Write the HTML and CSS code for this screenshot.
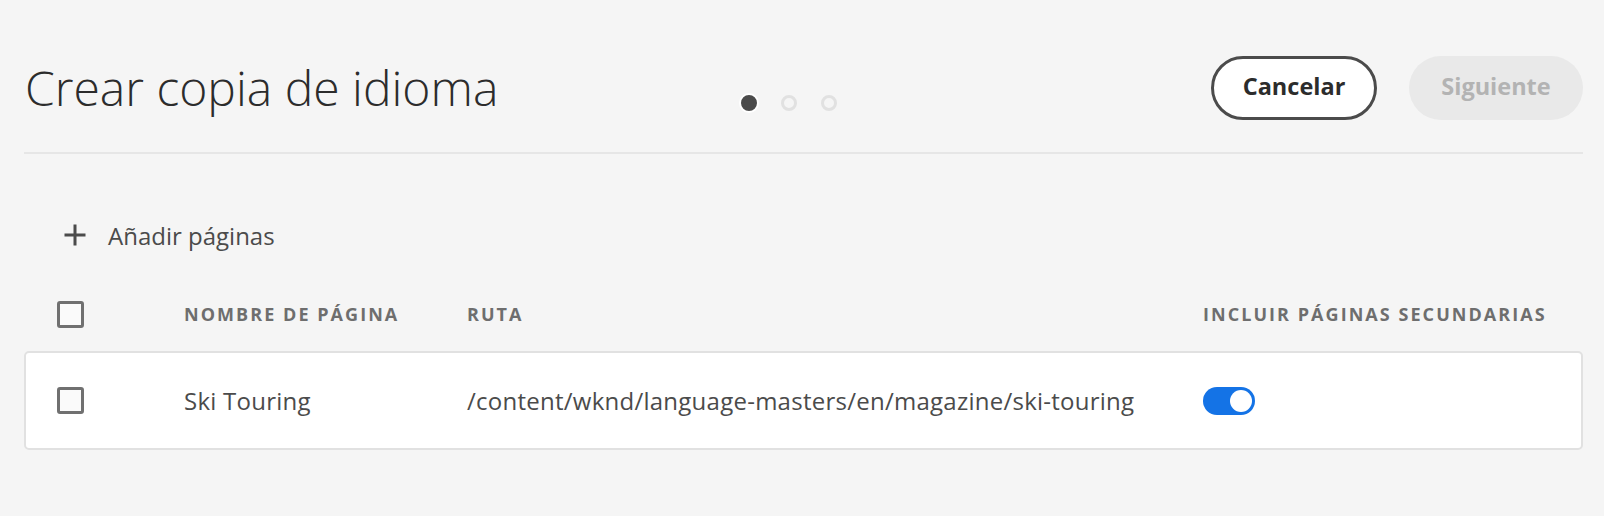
FILE: index.html
```html
<!DOCTYPE html>
<html lang="es">
<head>
<meta charset="utf-8">
<title>Crear copia de idioma</title>
<link rel="stylesheet" href="styles.css">
</head>
<body>
<div class="page">
  <header class="header">
    <h1 class="title">Crear copia de idioma</h1>
    <div class="steps">
      <span class="dot dot-active"></span>
      <span class="dot"></span>
      <span class="dot"></span>
    </div>
    <div class="actions">
      <button class="btn btn-cancel">Cancelar</button>
      <button class="btn btn-next" disabled>Siguiente</button>
    </div>
  </header>
  <div class="divider"></div>

  <div class="add-pages">
    <svg class="plus" width="24" height="24" viewBox="0 0 24 24"><path d="M12 1.5v21M1.5 12h21" stroke="#4b4b4b" stroke-width="3" fill="none"/></svg>
    <span>Añadir páginas</span>
  </div>

  <div class="row head-row">
    <div class="cell"><span class="checkbox"></span></div>
    <div class="cell">NOMBRE DE PÁGINA</div>
    <div class="cell">RUTA</div>
    <div class="cell">INCLUIR PÁGINAS SECUNDARIAS</div>
  </div>

  <div class="row card-row">
    <div class="cell"><span class="checkbox"></span></div>
    <div class="cell">Ski Touring</div>
    <div class="cell">/content/wknd/language-masters/en/magazine/ski-touring</div>
    <div class="cell"><span class="toggle"><span class="knob"></span></span></div>
  </div>
</div>
</body>
</html>
```

FILE: styles.css
```css
* { box-sizing: border-box; }
html, body { margin: 0; padding: 0; }
body {
  background: #f5f5f5;
  font-family: "Open Sans", "Noto Sans", sans-serif;
  color: #4b4b4b;
}
.page {
  width: 1604px;
  padding: 0 21px 0 24px;
}
.header {
  display: flex;
  align-items: center;
  height: 64px;
  margin-top: 56px;
}
.title {
  margin: 0;
  font-weight: 300;
  font-size: 48px;
  color: #2c2c2c;
  width: 717px;
  line-height: 64px;
  padding-left: 1px;
  white-space: nowrap;
}
.steps {
  display: flex;
  gap: 24px;
  padding-top: 30px;
}
.dot {
  width: 16px;
  height: 16px;
  border-radius: 50%;
  border: 3px solid #e1e1e1;
  display: block;
}
.dot-active {
  background: #4b4b4b;
  border-color: #4b4b4b;
  box-shadow: 0 0 0 2px #ffffff;
}
.actions {
  margin-left: auto;
  display: flex;
  gap: 32px;
}
.btn {
  height: 64px;
  border-radius: 32px;
  font-family: "Open Sans", "Noto Sans", sans-serif;
  font-weight: 700;
  font-size: 23.5px;
  line-height: 1;
  padding: 0 0 3px;
}
.btn-cancel {
  width: 166px;
  background: #ffffff;
  border: 3px solid #4b4b4b;
  color: #2c2c2c;
}
.btn-next {
  width: 174px;
  background: #e9e9e9;
  border: none;
  color: #b3b3b3;
}
.divider {
  height: 2px;
  background: #e6e6e6;
  margin-top: 32px;
}
.add-pages {
  display: flex;
  align-items: center;
  height: 44px;
  margin-top: 59px;
  padding-left: 39px;
  gap: 21px;
  font-size: 24px;
  color: #4b4b4b;
}
.plus { display: block; }
.row {
  display: grid;
  grid-template-columns: 127px 283px 736px 1fr;
  align-items: center;
  padding-left: 31px;
  border: 2px solid transparent;
}
.head-row {
  height: 60px;
  margin-top: 27px;
  font-size: 18px;
  font-weight: 700;
  letter-spacing: 2.05px;
  color: #6e6e6e;
}
.card-row {
  height: 99px;
  margin-top: 7px;
  background: #ffffff;
  border-color: #e1e1e1;
  border-radius: 5px;
  font-size: 24px;
  letter-spacing: 0.25px;
  color: #4b4b4b;
}
.cell { display: flex; align-items: center; white-space: nowrap; }
.checkbox {
  display: block;
  width: 27px;
  height: 27px;
  border: 3px solid #707070;
  border-radius: 3px;
  background: #fafafa;
}
.toggle {
  display: flex;
  justify-content: flex-end;
  align-items: center;
  width: 52px;
  height: 28px;
  border-radius: 14px;
  background: #1473e6;
  padding-right: 3px;
}
.knob {
  display: block;
  width: 22px;
  height: 22px;
  border-radius: 50%;
  background: #ffffff;
}
```
